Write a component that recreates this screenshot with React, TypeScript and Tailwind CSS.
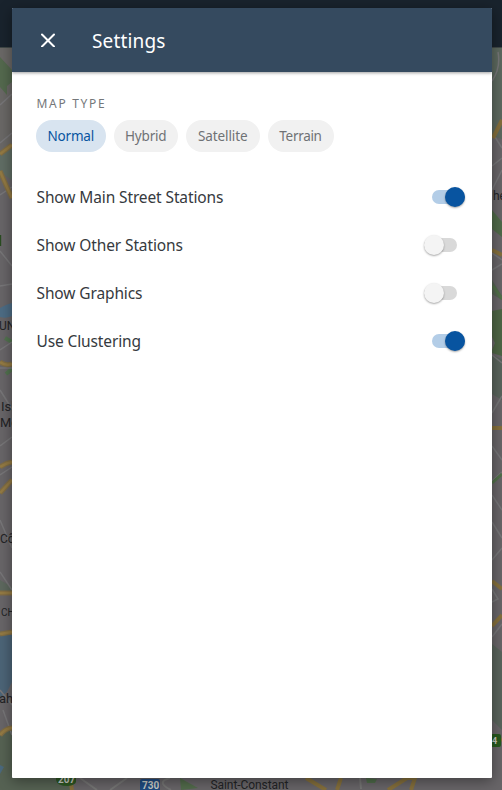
import { useState } from "react";

const mapTypes = [
  { name: "Normal", box: "w-[69.5px]", track: "tracking-[-0.2px]" },
  { name: "Hybrid", box: "w-[64.5px]", track: "tracking-[-0.2px]" },
  { name: "Satellite", box: "w-[73.5px]", track: "tracking-[-0.08px]" },
  { name: "Terrain", box: "w-[66px]", track: "tracking-[-0.3px]" },
];

const options = [
  { label: "Show Main Street Stations", on: true },
  { label: "Show Other Stations", on: false },
  { label: "Show Graphics", on: false },
  { label: "Use Clustering", on: true },
];

function MapBackdrop() {
  return (
    <svg className="absolute inset-0" width="502" height="790" viewBox="0 0 502 790" fontFamily="Roboto, sans-serif">
      <rect width="502" height="790" fill="#686568" />
      <path d="M0 47H12V145L0 155Z" fill="#6a6866" />
      <path d="M0 57L12 70V82L7 86V95L0 87Z" fill="#54694e" />
      <path d="M0 155L12 147V180L0 172Z" fill="#606d64" />
      <path d="M0 308Q7 304 12 303V316Q6 319 0 317Z" fill="#4d6c84" />
      <path d="M0 635H12V682L7 692L0 698Z" fill="#4c6477" />
      <path d="M0 735L12 725V778H70V790H0Z" fill="#566253" />
      <path d="M0 765L4 767L0 774Z" fill="#4b697d" />
      <path d="M0 580L12 587V594H0Z" fill="#5d685e" />
      <path d="M5 338L12 342M6 374L12 369" stroke="#537350" strokeWidth="4" />
      <g fill="none" stroke="#777678" strokeWidth="1.5">
        <path d="M0 105L12 94M0 143L12 133M0 195L12 187M0 251L12 266M0 286L12 284M0 350L12 342M0 368H12M0 390L12 409M0 446L12 437M0 475L12 467M0 520L12 548M0 572L12 590M0 690L12 705M3 710L12 735" />
      </g>
      <g fill="none" stroke="#806d43" strokeWidth="5">
        <path d="M0 154L12 145M0 171Q5 183 12 198M0 362Q5 366 12 364M0 467Q6 463 12 462M0 493L12 480M0 593H12M0 634L12 632M0 735Q6 728 12 728" />
      </g>
      <g fill="none" stroke="#937a43" strokeWidth="2.500">
        <path d="M0 154L12 145M0 171Q5 183 12 198M0 362Q5 366 12 364M0 467Q6 463 12 462M0 493L12 480M0 593H12M0 634L12 632M0 735Q6 728 12 728" />
      </g>
      <rect y="235" width="1.2" height="11" fill="#294c20" />

      <path d="M492 47H502V139L492 136Z" fill="#5d695f" />
      <path d="M492 210L502 222V237L492 229Z" fill="#506a49" />
      <path d="M492 280L502 296V300L492 294Z" fill="#566453" />
      <path d="M492 311L502 309V356L492 353V350L495 343L492 337Z" fill="#4e6645" />
      <path d="M492 355L502 359V400L492 394ZM492 644L502 652V730L492 720Z" fill="#59645c" />
      <g fill="none" stroke="#767678" strokeWidth="1.5">
        <path d="M495 137L502 148M492 166L502 158M492 190L502 170M498 52Q501 68 492 81M492 253L502 260M492 270L502 264M492 355L502 363M492 413L502 396M492 446L502 460M492 481L502 472M492 495L502 510M492 522L502 538M492 560L502 548M492 602L498 599L492 589M492 637L502 624" />
      </g>
      <path d="M493 286L502 299M492 483L502 474" stroke="#517049" strokeWidth="3" />
      <g fill="none" stroke="#846f3c" strokeWidth="4">
        <path d="M493 138L502 120M492 250L502 255M492 428H502M492 581L502 589M492 626L502 615M70 778L72 790M306 778L326 790M341 778L337 790M388 790L407 778L415 778L411 790M492 744L502 739" />
      </g>
      <path d="M180 778L198 788L181 790Z" fill="#526b4b" />
      <path d="M366 778L377 779L375 783H367Z" fill="#4f6c4a" />
      <path d="M80 778L97 790M110 790L127 778M170 778Q155 782 171 790M360 778L361 789" stroke="#757574" strokeWidth="2" fill="none" />
      <path d="M56 776H76V782Q75 785 68 786Q57 786 56 780Z" fill="#2d5722" />
      <rect x="140" y="779" width="20" height="13" rx="2" fill="#204b80" />
      <rect x="486" y="734" width="15" height="13" rx="2" fill="#275a1f" />
      <g fill="#c8cac4" fontWeight="700" fontSize="10">
        <text x="58" y="783">207</text>
        <text x="142" y="789">730</text>
        <text x="492" y="744" fontSize="9">4</text>
      </g>
      <g fill="#222325" fontSize="12">
        <text x="-1" y="330">UN</text>
        <text x="1" y="411" fontSize="13">Isl</text>
        <text x="0" y="427" fontSize="13">Mo</text>
        <text x="0" y="543">Cô</text>
        <text x="1" y="616" fontSize="10">CH</text>
        <text x="-1" y="703" fontSize="13">ah</text>
        <text x="493" y="200">he</text>
        <text x="210.500" y="789" textLength="78">Saint-Constant</text>
      </g>
      <rect width="502" height="47" fill="#19232d" />
      <path d="M0 47.500H502" stroke="#404847" />
    </svg>
  );
}

function Toggle({ label, on, onClick }: { label: string; on: boolean; onClick: () => void }) {
  return (
    <button
      role="switch"
      aria-label={label}
      aria-checked={on}
      onClick={onClick}
      className={`flex h-5 items-center ${on ? "w-[32.5px] justify-end" : "mr-[7.5px] w-[33px] justify-start"}`}
    >
      <span className={`flex h-[14px] w-full items-center rounded-full ${on ? "justify-end bg-[#b3cde7]" : "bg-[#d9d9d9]"}`}>
        <span className={`size-5 shrink-0 rounded-full shadow-[0_1px_2px_rgba(0,0,0,.35)] ${on ? "bg-[#0854a0]" : "bg-[#f4f4f4]"}`} />
      </span>
    </button>
  );
}

export default function App() {
  const [selected, setSelected] = useState("Normal");
  const [states, setStates] = useState(options.map((option) => option.on));
  return (
    <div className="relative h-[790px] w-[502px] overflow-hidden font-['Noto_Sans',sans-serif]">
      <MapBackdrop />
      <div className="relative flex h-full pt-[8px] pr-[10px] pb-3 pl-3">
        <main className="flex flex-1 flex-col overflow-hidden rounded-[1px] bg-white shadow-[0_3px_14px_rgba(0,0,0,.4)]">
          <header className="flex h-[64px] shrink-0 items-center bg-[#354a5f] pl-[29px] text-white shadow-[0_1px_3px_rgba(0,0,0,.38)]">
            <button aria-label="Close">
              <svg width="14" height="14" viewBox="0 0 14 14" fill="none" stroke="currentColor" strokeWidth="2" strokeLinecap="round">
                <path d="M1 1.500L13 13.500M13 1.500L1 13.500" />
              </svg>
            </button>
            <h1 className="ml-[37px] pt-px text-[19px] font-normal leading-6 tracking-[0.15px]">Settings</h1>
          </header>
          <section className="px-6 pt-[24px]">
            <h2 className="h-4 pl-[0.5px] text-[12px] leading-4 font-normal tracking-[1.7px] text-[#74777a]">MAP TYPE</h2>
            <div className="mt-[8.4px] flex gap-2">
              {mapTypes.map((type) => (
                <button
                  key={type.name}
                  onClick={() => setSelected(type.name)}
                  className={`h-8 rounded-full pb-px text-[13.5px] leading-5 font-normal ${type.box} ${type.track} ${selected === type.name ? "bg-[#d8e4f0] text-[#0854a0]" : "bg-[#f1f1f1] text-[#6f7275]"}`}
                >
                  {type.name}
                </button>
              ))}
            </div>
          </section>
          <section className="mt-[20.6px] px-6">
            {options.map((option, index) => (
              <div key={option.label} className="flex h-12 items-center justify-between pr-[3.5px]">
                <span className="pl-[0.5px] text-[15.5px] leading-6 font-normal tracking-[-0.12px] text-[#363a3e]">{option.label}</span>
                <Toggle
                  label={option.label}
                  on={states[index]}
                  onClick={() => setStates(states.map((state, position) => position === index ? !state : state))}
                />
              </div>
            ))}
          </section>
        </main>
      </div>
    </div>
  );
}
